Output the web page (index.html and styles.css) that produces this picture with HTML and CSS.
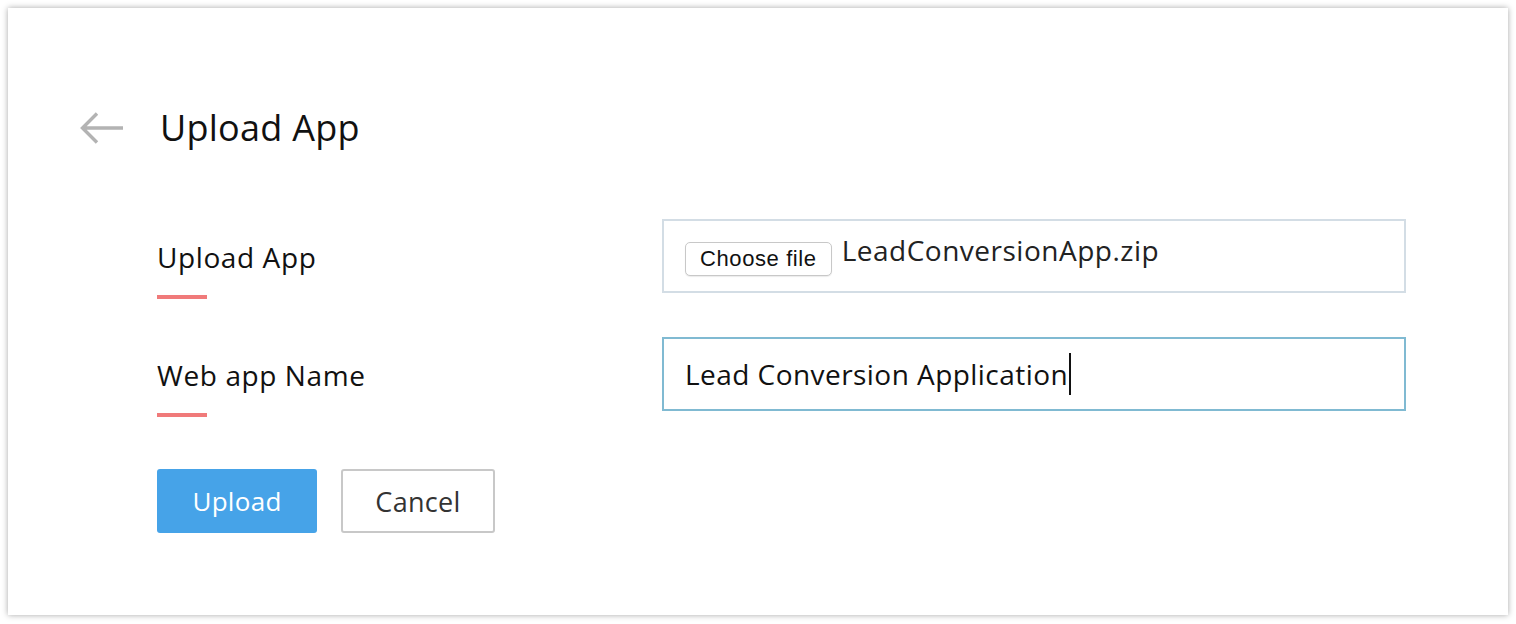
FILE: index.html
```html
<!DOCTYPE html>
<html>
<head>
<meta charset="utf-8">
<link rel="stylesheet" href="styles.css">
</head>
<body>
<div class="card">
  <div class="header">
    <svg class="back" width="45" height="34" viewBox="0 0 45 34">
      <path d="M44 17H3.5M18 2.5L3.5 17L18 31.5" fill="none" stroke="#b3b3b3" stroke-width="3.4"/>
    </svg>
    <h1 class="title">Upload App</h1>
  </div>
  <div class="form">
    <div class="row">
      <div class="label"><span class="label-text">Upload App</span><span class="mark"></span></div>
      <div class="field">
        <span class="choose">Choose file</span>
        <span class="filename">LeadConversionApp.zip</span>
      </div>
    </div>
    <div class="row">
      <div class="label"><span class="label-text">Web app Name</span><span class="mark"></span></div>
      <div class="field focused">
        <span class="value">Lead Conversion Application</span><span class="caret"></span>
      </div>
    </div>
    <div class="actions">
      <button class="btn primary">Upload</button>
      <button class="btn secondary">Cancel</button>
    </div>
  </div>
</div>
</body>
</html>
```
FILE: styles.css
```css
html, body {
  margin: 0;
  padding: 0;
  background: #ffffff;
}
body {
  padding: 8px;
  font-family: "Open Sans", "Liberation Sans", sans-serif;
  color: #111;
}
.card {
  width: 1500px;
  height: 607px;
  background: #fff;
  box-shadow: 0 0 6px rgba(0,0,0,0.35);
  box-sizing: border-box;
  padding-left: 71px;
}
.header {
  display: flex;
  align-items: center;
  padding-top: 102px;
  height: 36px;
}
.back {
  display: block;
  margin-right: 36px;
}
.title {
  margin: 0;
  font-weight: 400;
  font-size: 36px;
  line-height: 36px;
  letter-spacing: 0.25px;
  color: #111;
}
.form {
  display: flex;
  flex-direction: column;
  gap: 44px;
  padding-left: 78px;
  padding-top: 73px;
}
.row {
  display: flex;
  height: 74px;
}
.label {
  width: 505px;
  display: flex;
  flex-direction: column;
  padding-top: 21px;
}
.label-text {
  font-size: 28px;
  line-height: 34px;
  letter-spacing: 0.6px;
  color: #111;
  flex-shrink: 0;
}
.mark {
  display: block;
  flex-shrink: 0;
  width: 50px;
  height: 4px;
  background: #f07a7a;
  margin-top: 21px;
}
.field {
  width: 744px;
  height: 74px;
  box-sizing: border-box;
  border: 2px solid #d3dde5;
  display: flex;
  align-items: center;
  padding-left: 21px;
}
.field.focused {
  border-color: #80bad2;
}
.choose {
  font-family: "Liberation Sans", sans-serif;
  font-size: 22px;
  letter-spacing: 0.6px;
  line-height: 32px;
  height: 34px;
  box-sizing: border-box;
  padding: 0 14px;
  border: 1px solid #c8c8c8;
  border-radius: 5px;
  background: #fff;
  box-shadow: 0 1px 1px rgba(0,0,0,0.08);
  color: #111;
  margin-right: 10px;
  margin-top: 6px;
}
.filename {
  font-size: 28px;
  letter-spacing: 0.5px;
  color: #222;
  margin-top: -12px;
}
.value {
  font-size: 28px;
  letter-spacing: 0.45px;
  color: #111;
}
.caret {
  display: inline-block;
  width: 2px;
  height: 42px;
  background: #111;
  margin-left: 1px;
}
.actions {
  display: flex;
  gap: 24px;
  margin-top: 14px;
}
.btn {
  height: 64px;
  border-radius: 3px;
  font-family: "Open Sans", "Liberation Sans", sans-serif;
  font-size: 26px;
  letter-spacing: 0.3px;
  cursor: pointer;
}
.primary {
  width: 160px;
  background: #46a3e8;
  border: none;
  color: #fff;
}
.secondary {
  width: 154px;
  background: #fff;
  border: 2px solid #c8c8c8;
  color: #333;
  font-size: 27px;
}
```
